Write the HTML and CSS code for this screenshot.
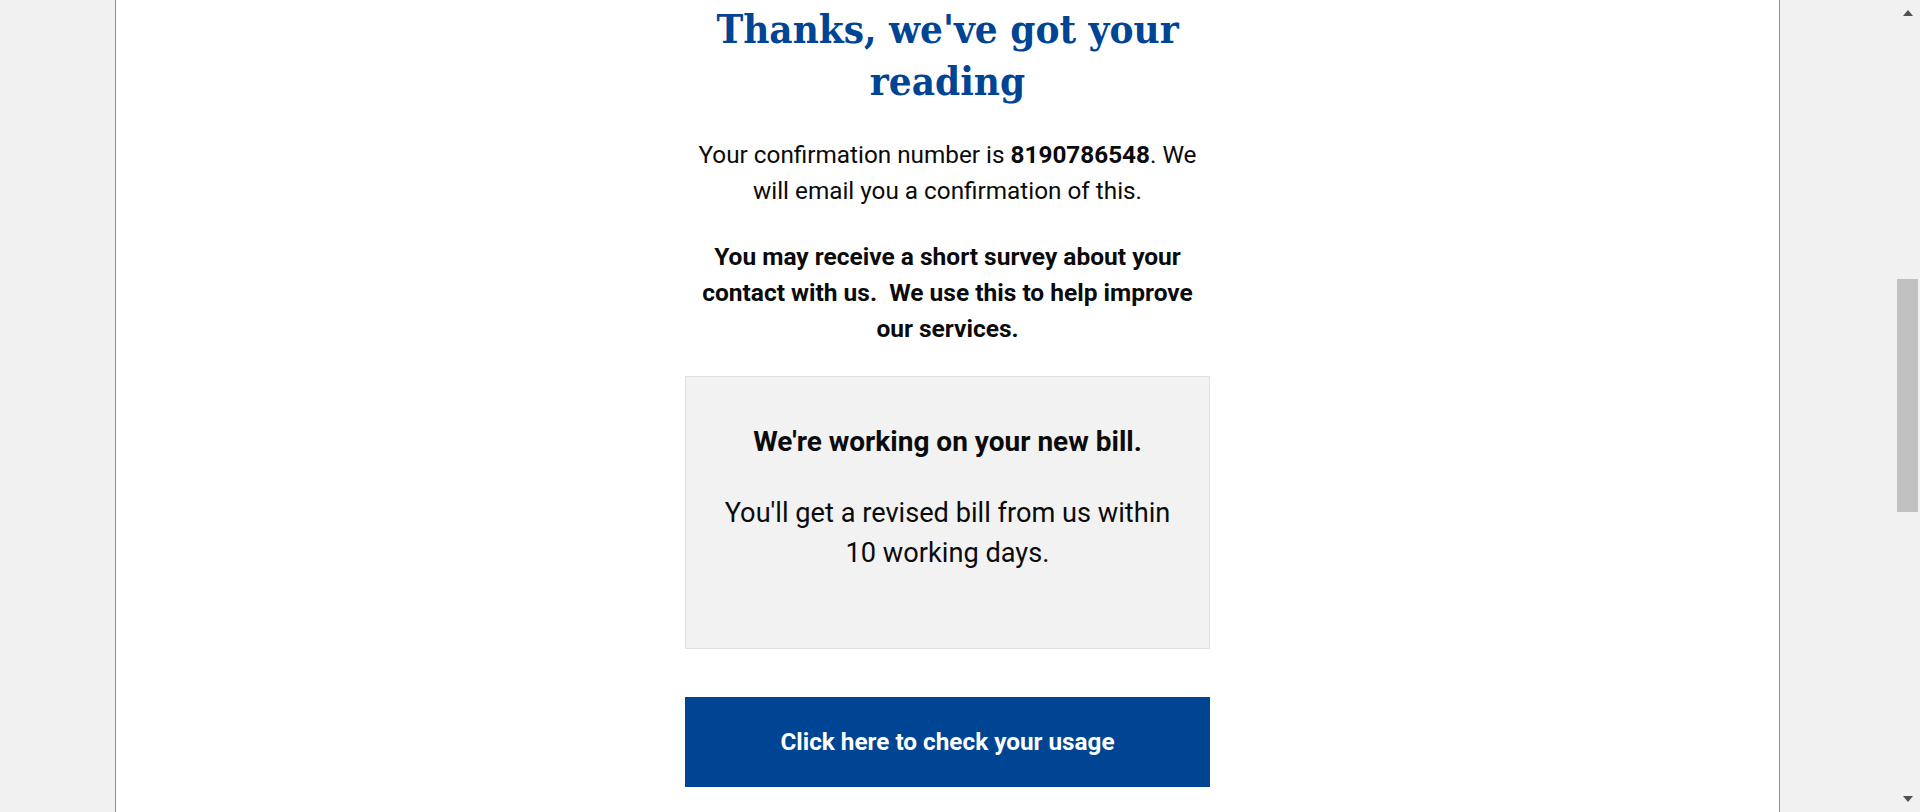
FILE: index.html
```html
<!DOCTYPE html>
<html lang="en">
<head>
<meta charset="utf-8">
<title>Thanks, we've got your reading</title>
<link rel="stylesheet" href="styles.css">
</head>
<body>
<div class="page">
  <div class="viewport">
    <main class="sheet">
      <div class="content">
        <h1 class="title">Thanks, we've got your reading</h1>
        <p class="lead">Your confirmation number is <strong>8190786548</strong>. We will email you a confirmation of this.</p>
        <p class="survey">You may receive a short survey about your contact with us.&nbsp; We use this to help improve our services.</p>
        <section class="notice">
          <h2 class="notice-title">We're working on your new bill.</h2>
          <p class="notice-text">You'll get a revised bill from us within 10 working days.</p>
        </section>
        <a class="cta" href="#">Click here to check your usage</a>
      </div>
    </main>
  </div>
  <div class="scrollbar">
    <div class="sb-btn sb-up"><span class="arrow-up"></span></div>
    <div class="sb-track"><div class="sb-thumb"></div></div>
    <div class="sb-btn sb-down"><span class="arrow-down"></span></div>
  </div>
</div>
</body>
</html>
```
FILE: styles.css
```css
html, body {
  margin: 0;
  padding: 0;
}
body {
  background: #f1f1f1;
  font-family: Roboto, "Liberation Sans", sans-serif;
  color: #0b0b0b;
}
.page {
  display: flex;
  height: 812px;
  overflow: hidden;
}
.viewport {
  flex: 1;
  display: flex;
  padding: 0 115px;
  min-width: 0;
}
.sheet {
  flex: 1;
  background: #ffffff;
  border-left: 1px solid #8f8f8f;
  border-right: 1px solid #8f8f8f;
  display: flex;
  justify-content: center;
}
.content {
  width: 525px;
  padding-top: 3px;
  display: flex;
  flex-direction: column;
  text-align: center;
}
.title {
  margin: 0 0 30px;
  font-family: "DejaVu Serif", "Liberation Serif", serif;
  font-stretch: condensed;
  font-weight: 700;
  font-size: 40px;
  line-height: 52px;
  color: #004494;
  padding: 0 20px;
}
.lead {
  margin: 0 0 30px;
  font-size: 24.3px;
  line-height: 36px;
  font-weight: 400;
}
.lead strong {
  font-weight: 700;
}
.survey {
  margin: 0 0 29px;
  font-size: 24.5px;
  line-height: 36px;
  font-weight: 700;
}
.notice {
  background: #f2f2f2;
  border: 1px solid #e1e1e1;
  padding: 45px 30px 74px;
}
.notice-title {
  margin: 0 0 30px;
  font-size: 28px;
  line-height: 40.5px;
  font-weight: 700;
}
.notice-text {
  margin: 0;
  font-size: 27.2px;
  line-height: 40.5px;
  font-weight: 400;
}
.cta {
  margin-top: 48px;
  height: 90px;
  background: #004494;
  color: #ffffff;
  text-decoration: none;
  display: flex;
  align-items: center;
  justify-content: center;
  font-size: 24.3px;
  font-weight: 700;
}
.scrollbar {
  width: 25px;
  flex: none;
  background: #f1f1f1;
  display: flex;
  flex-direction: column;
}
.sb-btn {
  height: 25px;
  flex: none;
  display: flex;
  justify-content: center;
  box-sizing: border-box;
}
.sb-up {
  padding-top: 10px;
}
.sb-down {
  padding-top: 9px;
}
.arrow-up {
  width: 0;
  height: 0;
  border-left: 5.5px solid transparent;
  border-right: 5.5px solid transparent;
  border-bottom: 6px solid #505050;
}
.arrow-down {
  width: 0;
  height: 0;
  border-left: 5.5px solid transparent;
  border-right: 5.5px solid transparent;
  border-top: 6px solid #505050;
}
.sb-track {
  flex: 1;
  padding: 0 2px;
}
.sb-thumb {
  margin-top: 254px;
  height: 233px;
  background: #c1c1c1;
}
```
